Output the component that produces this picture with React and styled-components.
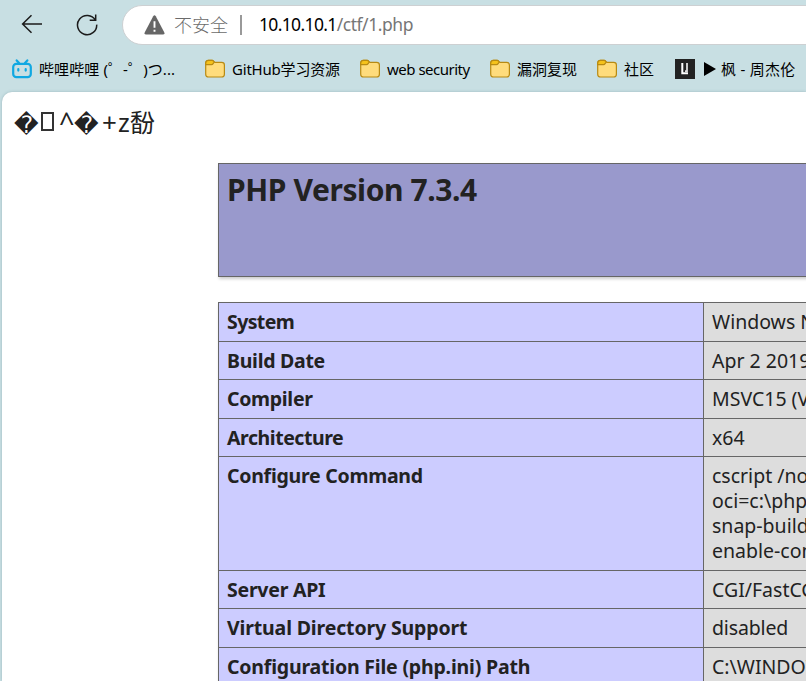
import React from "react";
import styled, { createGlobalStyle } from "styled-components";

const Global = createGlobalStyle`
  * { box-sizing: border-box; }
  html, body { margin: 0; overflow: hidden; background: #c8dfe3; }
  body { font-family: "Noto Sans", "Noto Sans CJK SC", sans-serif; color: #222; }
`;

const Window = styled.div`
  width: 806px;
  height: 681px;
  overflow: hidden;
  display: flex;
  flex-direction: column;
  background: #c8dfe3;
`;

const Toolbar = styled.header`
  height: 49px;
  flex: none;
  display: flex;
  align-items: center;
  padding-left: 20px;
`;

const NavButton = styled.button`
  border: 0;
  padding: 0 0 1px;
  background: none;
  width: 24px;
  height: 25px;
  margin-right: ${(p) => p.$gap}px;
  flex: none;
  svg { display: block; }
`;

const AddressBar = styled.div`
  height: 40px;
  width: 760px;
  flex: none;
  margin-top: 1px;
  padding-left: 21px;
  border: 1px solid #cdd0d2;
  border-radius: 20px;
  background: #fff;
  display: flex;
  align-items: center;
  font-size: 18px;
  white-space: pre;
  svg { flex: none; margin-bottom: 1px; }
`;

const Security = styled.span`
  width: 54px;
  margin-left: 9px;
  color: #6b6b6b;
  font-family: "Noto Sans CJK SC", sans-serif;
  font-weight: 300;
  line-height: 36px;
  padding-bottom: 3px;
`;

const Separator = styled.span`
  width: 2px;
  height: 20px;
  margin: 0 17px 0 12px;
  background: #999;
`;

const Url = styled.span`
  color: #767676;
  font-size: 17.5px;
  letter-spacing: ${(p) => p.$ls}px;
  line-height: 36px;
  padding-bottom: 2px;
  b { font-weight: 400; color: #000; letter-spacing: ${(p) => p.$hostLs}px; }
`;

const Bookmarks = styled.nav`
  height: 43px;
  flex: none;
  display: flex;
  align-items: center;
  padding: 0 0 3px 12px;
`;

const Bookmark = styled.a`
  width: ${(p) => p.$width}px;
  flex: none;
  display: flex;
  align-items: center;
  gap: 7px;
  color: #000;
  font-size: 15px;
  line-height: 24px;
  white-space: pre;
  svg { flex: none; }
`;

const Label = styled.span`
  letter-spacing: ${(p) => p.$ls || 0}px;
`;

const Page = styled.main`
  flex: 1;
  min-height: 0;
  margin-left: 2px;
  padding-left: 12px;
  background: #fff;
  border-radius: 10px 0 0 0;
  box-shadow: 0 0 3px rgba(70, 110, 120, 0.35);
  overflow: hidden;
`;

const Garbled = styled.div`
  height: 71px;
  padding-top: 13px;
  display: flex;
  font-size: 24px;
  line-height: 34px;
  color: #222;
`;

const Glyph = styled.span`
  width: ${(p) => p.$w}px;
  flex: none;
  font-size: ${(p) => p.$size || 24}px;
  padding-top: ${(p) => p.$drop || 0}px;
`;

const Replacement = styled(Glyph)`
  font-family: "DejaVu Sans", sans-serif;
  padding-top: 3px;
`;

const MissingGlyph = styled.span`
  width: 13px;
  height: 19px;
  margin: 7px 5px 0 2px;
  border: 2px solid #333;
`;

const Banner = styled.section`
  width: 1168px;
  height: 114px;
  margin: 0 0 25px 204px;
  padding: 5px 8px;
  border: 1px solid #666;
  background: #9999cc;
  box-shadow: 1px 2px 3px #ccc;
`;

const Title = styled.h1`
  margin: 0;
  font-size: 30px;
  line-height: 41px;
  font-weight: 700;
  letter-spacing: ${(p) => p.$ls}px;
  white-space: nowrap;
`;

const Info = styled.div`
  width: 1168px;
  margin-left: 204px;
  border: 1px solid #666;
  border-top: 0;
  box-shadow: 1px 2px 3px #ccc;
`;

const Row = styled.div`
  height: ${(p) => p.$h}px;
  display: grid;
  grid-template-columns: 484px 1fr;
  border-top: 1px solid #666;
  font-size: 19.5px;
  line-height: 25px;
`;

const Key = styled.div`
  padding: 6px 8px;
  background: #ccccff;
  font-weight: 700;
  letter-spacing: ${(p) => p.$ls || 0}px;
`;

const Value = styled.div`
  padding: 6px 8px;
  border-left: 1px solid #666;
  background: #ddd;
  white-space: pre;
  letter-spacing: ${(p) => p.$ls || 0}px;
`;

const BackIcon = () => (
  <svg width="24" height="24" viewBox="0 0 24 24" fill="none" stroke="#1b1b1b" strokeWidth="1.5">
    <path d="M11.5 3.3 2.6 12l8.9 8.7M2.6 12H22" />
  </svg>
);

const ReloadIcon = () => (
  <svg width="24" height="24" viewBox="0 0 24 24" fill="none" stroke="#1b1b1b" strokeWidth="1.5">
    <path d="M20.4 8.2A9.6 9.6 0 1 0 21.7 12.6M20.7 2.4v5.9h-6" />
  </svg>
);

const WarningIcon = () => (
  <svg width="21" height="20" viewBox="0 0 21 20">
    <path d="M9.2 1.3q1.3-2 2.6 0l8.4 15.9q.9 2.2-1.4 2.3H2.2q-2.3-.1-1.4-2.3z" fill="#666" />
    <path d="M10.5 6.2v6.6M10.5 14.7v2.1" stroke="#fff" strokeWidth="1.9" />
  </svg>
);

const BiliIcon = () => (
  <svg width="20" height="20" viewBox="0 0 20 20" fill="none" stroke="#10a8e2" strokeWidth="2.2" strokeLinecap="round">
    <rect x="1.2" y="4.9" width="17.6" height="13.2" rx="3.2" />
    <path d="M4.7 1.4 7 4M15.3 1.4 13 4M6.3 10.2v1.4M13.7 10.2v1.4" />
  </svg>
);

const FolderIcon = () => (
  <svg width="20" height="20" viewBox="0 0 20 20" stroke="#b88a13" strokeWidth="1.2">
    <path d="M.7 4.2q0-2.8 2.8-2.8h3.6q.9 0 1.5.7l1.3 1.3h6.8q2.7 0 2.7 2.7v9.1q0 2.8-2.8 2.8H3.5q-2.8 0-2.8-2.8z" fill="#ffdc7c" />
    <path d="M.7 4.2q0-2.8 2.8-2.8h3.6q.9 0 1.5.7l.5 1-1 1.6q-.6.9-1.6.9H.7z" fill="#f5c21b" />
  </svg>
);

const LetterIcon = () => (
  <svg width="20" height="20" viewBox="0 0 20 20">
    <rect width="20" height="20" fill="#222" />
    <path d="M7.3 4v10.2h5.7" stroke="#fff" strokeWidth="2" fill="none" />
    <path d="M12 4v8.2h-2" stroke="#ddd" strokeWidth="1.8" fill="none" />
  </svg>
);

const PlayIcon = styled(({ className }) => (
  <svg className={className} width="12" height="14" viewBox="0 0 12 14">
    <path d="M0 0 12 7 0 14z" fill="#000" />
  </svg>
))`
  margin: 0 -2px 0 2px;
`;

const rows = [
  { key: "System", value: "Windows NT", h: 39, kls: -0.6 },
  { key: "Build Date", value: "Apr 2 2019 21:50:57", h: 38, kls: -0.28 },
  { key: "Compiler", value: "MSVC15 (Visual C++ 2017)", h: 39, kls: -0.3 },
  { key: "Architecture", value: "x64", h: 38, kls: -0.45 },
  {
    key: "Configure Command",
    value: "cscript /nologo\noci=c:\\php-snap\nsnap-build\nenable-com",
    h: 114,
    kls: -0.26,
  },
  { key: "Server API", value: "CGI/FastCGI", h: 38, kls: -0.25 },
  { key: "Virtual Directory Support", value: "disabled", h: 39, kls: -0.15, vls: -0.15 },
  { key: "Configuration File (php.ini) Path", value: "C:\\WINDOWS", h: 39, kls: -0.19 },
];

export default function App() {
  return (
    <>
      <Global />
      <Window>
        <Toolbar>
          <NavButton $gap={31} aria-label="Back"><BackIcon /></NavButton>
          <NavButton $gap={23} aria-label="Reload"><ReloadIcon /></NavButton>
          <AddressBar>
            <WarningIcon />
            <Security>不安全</Security>
            <Separator />
            <Url $ls={-0.45} $hostLs={-0.65}><b>10.10.10.1</b>/ctf/1.php</Url>
          </AddressBar>
        </Toolbar>
        <Bookmarks>
          <Bookmark $width={193}><BiliIcon /><Label $ls={0.1}>哔哩哔哩 (゜-゜)つ...</Label></Bookmark>
          <Bookmark $width={155}><FolderIcon /><Label $ls={-0.2}>GitHub学习资源</Label></Bookmark>
          <Bookmark $width={130}><FolderIcon /><Label $ls={-0.5}>web security</Label></Bookmark>
          <Bookmark $width={107}><FolderIcon /><Label>漏洞复现</Label></Bookmark>
          <Bookmark $width={78}><FolderIcon /><Label>社区</Label></Bookmark>
          <Bookmark $width={131}><LetterIcon /><PlayIcon /><Label $ls={0.25}>枫 - 周杰伦</Label></Bookmark>
        </Bookmarks>
        <Page>
          <Garbled>
            <Replacement $w={25}>�</Replacement>
            <MissingGlyph />
            <Glyph $w={15} $size={27}>^</Glyph>
            <Replacement $w={28}>�</Replacement>
            <Glyph $w={16} $size={26}>+</Glyph>
            <Glyph $w={12} $size={25}>z</Glyph>
            <Glyph $w={25} $size={25}>馚</Glyph>
          </Garbled>
          <Banner><Title $ls={-0.4}>PHP Version 7.3.4</Title></Banner>
          <Info>
            {rows.map((r) => (
              <Row key={r.key} $h={r.h}>
                <Key $ls={r.kls}>{r.key}</Key>
                <Value $ls={r.vls}>{r.value}</Value>
              </Row>
            ))}
          </Info>
        </Page>
      </Window>
    </>
  );
}
